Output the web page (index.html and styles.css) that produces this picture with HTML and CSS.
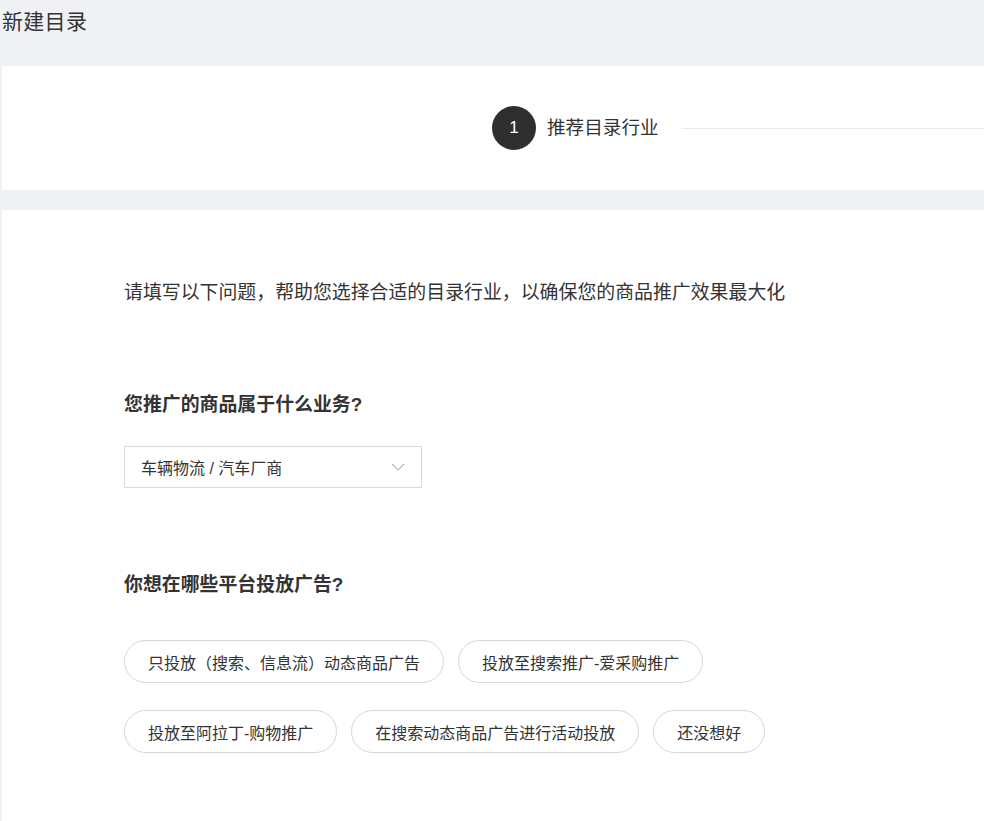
FILE: index.html
```html
<!DOCTYPE html>
<html lang="zh-CN">
<head>
<meta charset="utf-8">
<title>新建目录</title>
<link rel="stylesheet" href="styles.css">
</head>
<body>
<div class="page">
  <header class="page-header">
    <h1 class="page-title">新建目录</h1>
  </header>

  <section class="card steps-card">
    <div class="steps">
      <div class="step active">
        <span class="step-num">1</span>
        <span class="step-label">推荐目录行业</span>
      </div>
      <div class="step-line"></div>
    </div>
  </section>

  <section class="card form-card">
    <p class="intro">请填写以下问题，帮助您选择合适的目录行业，以确保您的商品推广效果最大化</p>

    <h2 class="question q-first">您推广的商品属于什么业务?</h2>
    <div class="select">
      <span class="select-value">车辆物流 / 汽车厂商</span>
      <svg class="select-arrow" width="14" height="8" viewBox="0 0 14 8" aria-hidden="true">
        <path d="M1 1 L7 7 L13 1" fill="none" stroke="#b5b5b5" stroke-width="1.2"/>
      </svg>
    </div>

    <h2 class="question q-second">你想在哪些平台投放广告?</h2>
    <div class="pills">
      <div class="pill-row">
        <button class="pill">只投放（搜索、信息流）动态商品广告</button>
        <button class="pill">投放至搜索推广-爱采购推广</button>
      </div>
      <div class="pill-row">
        <button class="pill">投放至阿拉丁-购物推广</button>
        <button class="pill">在搜索动态商品广告进行活动投放</button>
        <button class="pill">还没想好</button>
      </div>
    </div>
  </section>
</div>
</body>
</html>
```

FILE: styles.css
```css
* { box-sizing: border-box; }

html, body {
  margin: 0;
  padding: 0;
  background: #f0f1f5;
  font-family: "Liberation Sans", "Noto Sans CJK SC", sans-serif;
  color: #333;
}

.page {
  padding-left: 2px;
  min-height: 821px;
}

.page-header {
  height: 66px;
  padding-top: 8px;
}

.page-title {
  margin: 0;
  font-size: 21px;
  font-weight: normal;
  line-height: 28px;
  color: #333;
  letter-spacing: 0.3px;
}

.card {
  background: #fff;
}

.steps-card {
  height: 124px;
  display: flex;
  align-items: center;
}

.steps {
  display: flex;
  align-items: center;
  width: 100%;
  padding-left: 490px;
}

.step {
  display: flex;
  align-items: center;
  flex: none;
}

.step-num {
  width: 44px;
  height: 44px;
  border-radius: 50%;
  background: #2f2f2f;
  color: #fff;
  font-size: 17px;
  display: flex;
  align-items: center;
  justify-content: center;
}

.step-label {
  margin-left: 11px;
  font-size: 18.6px;
  color: #333;
  line-height: 28px;
}

.step-line {
  flex: 1;
  height: 1px;
  background: #ebebeb;
  margin-left: 23px;
}

.form-card {
  margin-top: 20px;
  padding: 69px 0 68px 122px;
  min-height: 611px;
}

.intro {
  margin: 0;
  font-size: 18.9px;
  line-height: 28px;
  color: #333;
}

.question {
  margin: 0;
  font-size: 18.9px;
  line-height: 28px;
  font-weight: bold;
  color: #333;
}

.q-first { margin-top: 84px; }
.q-second { margin-top: 83px; }

.select {
  margin-top: 27px;
  width: 298px;
  height: 42px;
  border: 1px solid #d9d9d9;
  display: flex;
  align-items: center;
  justify-content: space-between;
  padding: 0 16px 0 16px;
}

.select-value {
  font-size: 16px;
  color: #333;
}

.select-arrow {
  display: block;
}

.pills {
  margin-top: 41px;
  display: flex;
  flex-direction: column;
  gap: 27px;
}

.pill-row {
  display: flex;
  gap: 14px;
}

.pill {
  height: 43px;
  padding: 0 23px;
  border: 1px solid #d6d6d6;
  border-radius: 22px;
  background: #fff;
  font-family: "Liberation Sans", "Noto Sans CJK SC", sans-serif;
  font-size: 16px;
  color: #333;
  cursor: pointer;
}
```
